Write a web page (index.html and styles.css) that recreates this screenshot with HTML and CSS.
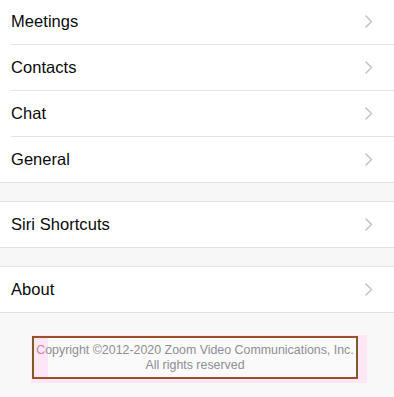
FILE: index.html
```html
<!DOCTYPE html>
<html>
<head>
<meta charset="utf-8">
<link rel="stylesheet" href="styles.css">
</head>
<body>
<div class="page">
  <div class="group first">
    <div class="row"><span class="label">Meetings</span><svg class="chev" viewBox="0 0 8 13"><path d="M1 1l5.5 5.5L1 12"/></svg></div>
    <div class="row"><span class="label">Contacts</span><svg class="chev" viewBox="0 0 8 13"><path d="M1 1l5.5 5.5L1 12"/></svg></div>
    <div class="row"><span class="label">Chat</span><svg class="chev" viewBox="0 0 8 13"><path d="M1 1l5.5 5.5L1 12"/></svg></div>
    <div class="row last"><span class="label">General</span><svg class="chev" viewBox="0 0 8 13"><path d="M1 1l5.5 5.5L1 12"/></svg></div>
  </div>
  <div class="gap"></div>
  <div class="group">
    <div class="row last"><span class="label">Siri Shortcuts</span><svg class="chev" viewBox="0 0 8 13"><path d="M1 1l5.5 5.5L1 12"/></svg></div>
  </div>
  <div class="gap"></div>
  <div class="group">
    <div class="row last"><span class="label">About</span><svg class="chev" viewBox="0 0 8 13"><path d="M1 1l5.5 5.5L1 12"/></svg></div>
  </div>
  <div class="footer">
    <div class="highlight">
      <div class="box">
        <div class="strip"></div>
        <p class="copy"><span class="first-c">C</span>opyright ©2012-2020 Zoom Video Communications, Inc.<br>All rights reserved</p>
      </div>
    </div>
  </div>
</div>
</body>
</html>
```

FILE: styles.css
```css
html, body {
  margin: 0;
  padding: 0;
  background: #f8f8f8;
}
body {
  width: 394px;
  height: 397px;
  overflow: hidden;
  font-family: "Liberation Sans", Arial, sans-serif;
}
.page {
  display: flex;
  flex-direction: column;
}
.group {
  background: #fff;
  border-top: 1px solid #e1e1e1;
  border-bottom: 1px solid #e1e1e1;
}
.group.first {
  margin-top: -1px;
  border-top: none;
}
.row {
  display: flex;
  align-items: center;
  justify-content: space-between;
  height: 45px;
  margin-left: 11px;
  padding-right: 21px;
  border-bottom: 1px solid #e3e3e3;
}
.row.last {
  border-bottom: none;
}
.label {
  font-size: 16.5px;
  color: #0a0a0a;
  letter-spacing: 0.05px;
}
.chev {
  width: 8px;
  height: 13px;
  fill: none;
  stroke: #c3c3c7;
  stroke-width: 1.5;
  stroke-linecap: round;
  stroke-linejoin: round;
}
.gap {
  height: 18px;
  background: #f7f7f7;
}
.footer {
  flex: 1;
  background: #f8f8f8;
  padding-top: 22px;
  padding-left: 31px;
}
.highlight {
  width: 336px;
  height: 48px;
  background: #fde6f5;
  padding-top: 1px;
  padding-left: 1px;
  box-sizing: border-box;
}
.box {
  position: relative;
  width: 326px;
  height: 43px;
  box-sizing: border-box;
  border: 2px solid #7e5a24;
  border-top-color: #9c4f2a;
  border-bottom-color: #9c4f2a;
  background: #fafafa;
  display: flex;
  align-items: center;
  justify-content: center;
}
.strip {
  position: absolute;
  left: 0;
  top: 0;
  bottom: 0;
  width: 14px;
  background: #fde6f5;
}
.copy {
  position: relative;
  margin: 0;
  text-align: center;
  font-size: 12.4px;
  line-height: 15px;
  color: #8e8e93;
}
.first-c {
  color: #d9809d;
}
```
